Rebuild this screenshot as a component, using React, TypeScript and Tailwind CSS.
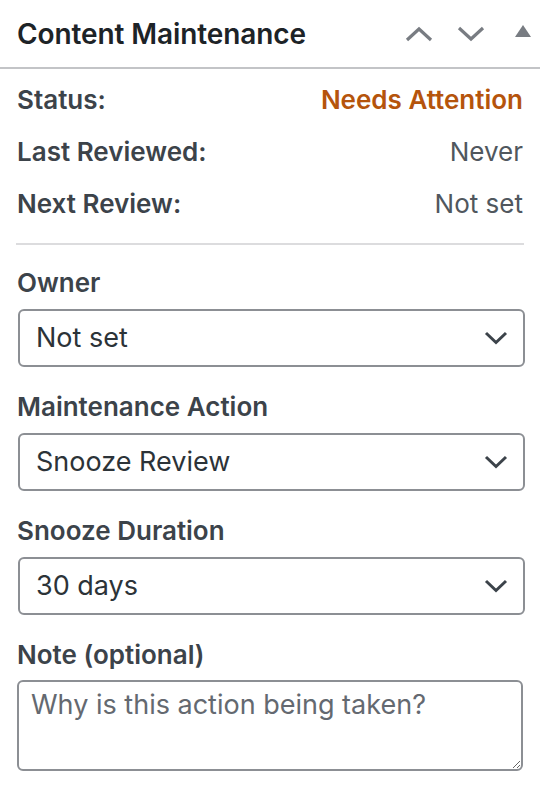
import React from "react";

const Chevron = ({ className }: { className?: string }) => (
  <svg viewBox="0 0 24 14" className={className} fill="none" stroke="currentColor" strokeWidth="3" strokeLinecap="butt" strokeLinejoin="miter">
    <path d="M2 2 L12 11.5 L22 2" />
  </svg>
);

function Field({ label, value }: { label: string; value: string }) {
  return (
    <div className="flex flex-col">
      <label className="text-[26px] leading-[30px] font-semibold text-[#3c434a]">{label}</label>
      <div className="mt-[11px] h-[58px] ml-[1px] mr-[-2px] rounded-[6px] border-2 border-[#8c8f94] bg-white flex items-center justify-between pl-[16px] pr-[15px]">
        <span className="text-[27px] text-[#2c3338]">{value}</span>
        <Chevron className="w-[24px] h-[14px] text-[#3c434a]" />
      </div>
    </div>
  );
}

export default function App() {
  return (
    <div className="w-[540px] h-[794px] bg-white overflow-hidden" style={{ fontFamily: "Inter, 'Noto Sans', sans-serif" }}>
      <div className="h-[69px] border-b-2 border-[#c3c4c7] flex items-center justify-between pl-[17px] pr-[9px]">
        <h2 className="text-[28px] font-semibold text-[#1d2327] tracking-[-0.1px]">Content Maintenance</h2>
        <div className="flex items-center">
          <svg viewBox="0 0 28 16" className="w-[28px] h-[16px] text-[#787c82]" fill="none" stroke="currentColor" strokeWidth="3.2">
            <path d="M2 14 L14 3 L26 14" />
          </svg>
          <svg viewBox="0 0 28 16" className="w-[28px] h-[16px] ml-[24px] text-[#787c82]" fill="none" stroke="currentColor" strokeWidth="3.2">
            <path d="M2 2 L14 13 L26 2" />
          </svg>
          <svg viewBox="0 0 16 12" className="w-[16px] h-[12px] ml-[30px] mb-[6px] text-[#787c82]" fill="currentColor">
            <path d="M8 0 L16 12 L0 12 Z" />
          </svg>
        </div>
      </div>
      <div className="px-[17px] pt-[4px]">
        <div className="flex flex-col">
          <div className="h-[52px] flex items-center justify-between">
            <span className="text-[26px] font-semibold text-[#3c434a]">Status:</span>
            <span className="text-[26px] font-semibold text-[#b5540c]">Needs Attention</span>
          </div>
          <div className="h-[52px] flex items-center justify-between">
            <span className="text-[26px] font-semibold text-[#3c434a]">Last Reviewed:</span>
            <span className="text-[26px] text-[#50575e]">Never</span>
          </div>
          <div className="h-[52px] flex items-center justify-between">
            <span className="text-[26px] font-semibold text-[#3c434a]">Next Review:</span>
            <span className="text-[26px] text-[#50575e]">Not set</span>
          </div>
        </div>
        <div className="mt-[14px] h-[2px] bg-[#dcdcde] mr-[-1px] ml-[-1px]" />
        <div className="mt-[23px] flex flex-col gap-[25px]">
          <Field label="Owner" value="Not set" />
          <Field label="Maintenance Action" value="Snooze Review" />
          <Field label="Snooze Duration" value="30 days" />
          <div className="flex flex-col">
            <label className="text-[26px] leading-[30px] font-semibold text-[#3c434a]">Note (optional)</label>
            <textarea
              placeholder="Why is this action being taken?"
              className="mt-[10px] h-[91px] w-full rounded-[6px] border-2 border-[#8c8f94] bg-white px-[12px] py-[5px] text-[27px] leading-[36px] text-[#2c3338] placeholder:text-[#646970] outline-none"
            />
          </div>
        </div>
      </div>
    </div>
  );
}
